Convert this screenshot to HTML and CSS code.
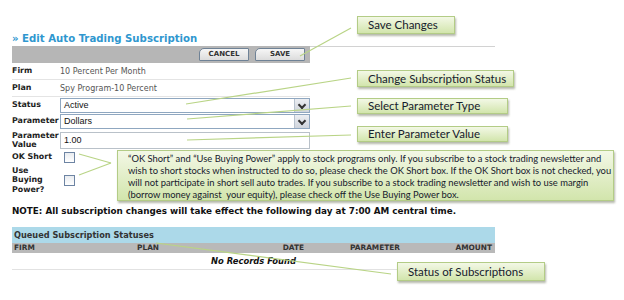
FILE: index.html
```html
<!DOCTYPE html>
<html lang="en">
<head>
  <meta charset="UTF-8">
  <title>Edit Auto Trading Subscription</title>
  <link rel="stylesheet" href="styles.css">
</head>
<body>
  <div class="page">
    <h1 class="title">» Edit Auto Trading Subscription</h1>

    <div class="toolbar-line">
      <div class="toolbar">
        <button class="btn">CANCEL</button>
        <button class="btn">SAVE</button>
      </div>
    </div>

    <div class="form">
      <div class="row row-text sep">
        <span class="label">Firm</span>
        <span class="value">10 Percent Per Month</span>
      </div>
      <div class="row row-text sep">
        <span class="label">Plan</span>
        <span class="value">Spy Program-10 Percent</span>
      </div>
      <div class="row row-select">
        <span class="label">Status</span>
        <div class="select"><span>Active</span><span class="arrow"></span></div>
      </div>
      <div class="row row-select">
        <span class="label">Parameter</span>
        <div class="select"><span>Dollars</span><span class="arrow"></span></div>
      </div>
      <div class="row row-input">
        <span class="label">Parameter<br>Value</span>
        <div class="input">1.00</div>
      </div>
      <div class="row row-check">
        <span class="label">OK Short</span>
        <span class="check"></span>
      </div>
      <div class="row row-check tall">
        <span class="label">Use<br>Buying<br>Power?</span>
        <span class="check"></span>
      </div>
    </div>

    <p class="note">NOTE: All subscription changes will take effect the following day at 7:00 AM central time.</p>

    <div class="queue">
      <div class="queue-title">Queued Subscription Statuses</div>
      <div class="queue-head">
        <span>FIRM</span>
        <span>PLAN</span>
        <span class="right">DATE</span>
        <span class="param">PARAMETER</span>
        <span class="right">AMOUNT</span>
      </div>
      <div class="queue-empty">No Records Found</div>
    </div>
  </div>

  <!-- annotation leaders -->
  <svg class="leaders" width="624" height="300" viewBox="0 0 624 300">
    <g stroke="#b9d486" stroke-width="1.2" fill="none">
      <line x1="351" y1="28" x2="300" y2="56"/>
      <line x1="351" y1="78" x2="186" y2="104"/>
      <line x1="351" y1="106" x2="187" y2="119"/>
      <line x1="351" y1="135" x2="187" y2="140"/>
      <line x1="79" y1="154" x2="111" y2="163"/>
      <line x1="79" y1="175" x2="111" y2="163"/>
      <line x1="156" y1="243" x2="391" y2="274"/>
    </g>
  </svg>

  <div class="callout c-save">Save Changes</div>
  <div class="callout c-status">Change Subscription Status</div>
  <div class="callout c-type">Select Parameter Type</div>
  <div class="callout c-value">Enter Parameter Value</div>
  <div class="callout c-subs">Status of Subscriptions</div>
  <div class="callout c-info">
    “OK Short” and “Use Buying Power” apply to stock programs only. If you subscribe to a stock trading newsletter and<br>
    wish to short stocks when instructed to do so, please check the OK Short box. If the OK Short box is not checked, you<br>
    will not participate in short sell auto trades. If you subscribe to a stock trading newsletter and wish to use margin<br>
    (borrow money against&nbsp; your equity), please check off the Use Buying Power box.
  </div>
</body>
</html>
```

FILE: styles.css
```css
body {
  margin: 0;
  width: 624px;
  height: 300px;
  background: #fff;
  font-family: 'DejaVu Sans', Verdana, sans-serif;
  color: #222;
  position: relative;
  overflow: hidden;
}
.page {
  padding: 31px 0 0 12px;
}
.title {
  margin: 0;
  height: 15px;
  line-height: 15px;
  font-family: 'DejaVu Sans Condensed', 'DejaVu Sans', sans-serif;
  font-size: 11.3px;
  font-weight: bold;
  color: #2f97cf;
}
.toolbar-line {
  width: 483px;
  border-top: 1px solid #d2d2d2;
}
.toolbar {
  width: 298px;
  height: 17px;
  margin-top: -1px;
  background: #b6b6b6;
  display: flex;
  justify-content: flex-end;
  align-items: center;
  gap: 6px;
  padding-right: 5px;
  box-sizing: border-box;
}
.btn {
  width: 50px;
  height: 13px;
  padding: 0;
  border: 1px solid #6f8296;
  border-radius: 5px 1px 1px 1px;
  background: linear-gradient(#f6f6f6, #dcdcdc);
  font-family: 'DejaVu Sans', sans-serif;
  font-size: 7px;
  font-weight: bold;
  color: #333;
  line-height: 11px;
}
.form {
  width: 298px;
}
.row {
  display: flex;
  align-items: center;
}
.label {
  width: 48px;
  flex: none;
  font-size: 7.9px;
  font-weight: bold;
  color: #222;
  line-height: 9.5px;
}
.value {
  font-size: 8px;
  color: #555;
}
.row-text {
  height: 16px;
}
.sep {
  border-bottom: 1px solid #e4e4e4;
}
.row-select {
  height: 16px;
}
.select, .input {
  width: 250px;
  height: 15px;
  box-sizing: border-box;
  border: 1px solid #8fa7c0;
  display: flex;
  align-items: center;
  justify-content: space-between;
  font-family: 'Liberation Sans', Arial, sans-serif;
  font-size: 9px;
  color: #111;
  padding-left: 3px;
  background: #fff;
}
.arrow {
  width: 14px;
  height: 13px;
  background: linear-gradient(#eceef2, #cfd4dc);
  border-left: 1px solid #b8c2ce;
  position: relative;
}
.arrow::after {
  content: '';
  position: absolute;
  left: 4px;
  top: 3px;
  width: 4px;
  height: 4px;
  border-right: 2px solid #333;
  border-bottom: 2px solid #333;
  transform: rotate(45deg);
}
.row-input {
  height: 20px;
  margin-top: 1px;
}
.input {
  height: 17px;
  border-color: #b9c1c9;
}
.row-check {
  height: 14px;
}
.row-check.tall {
  height: 32px;
}
.check {
  width: 9px;
  height: 9px;
  margin-left: 4px;
  border: 1px solid #6d84a3;
  background: linear-gradient(#e9ecf0, #fff);
}
.note {
  margin: 10px 0 0;
  font-size: 8.8px;
  font-weight: bold;
  color: #111;
}
.queue {
  width: 483px;
  margin-top: 11px;
  border-bottom: 1px solid #e2e2e2;
}
.queue-title {
  height: 16px;
  line-height: 16px;
  background: #acd9e9;
  padding-left: 2px;
  font-size: 8.2px;
  font-weight: bold;
  color: #333;
}
.queue-head {
  height: 10px;
  background: #b9b9b9;
  display: grid;
  grid-template-columns: 123px 123px 44px 136px 1fr;
  padding: 0 3px 0 2px;
  font-size: 7.4px;
  font-weight: bold;
  color: #333;
  line-height: 10px;
}
.queue-head .right {
  text-align: right;
}
.queue-head .param {
  padding-left: 46px;
}
.queue-empty {
  height: 16px;
  line-height: 16px;
  text-align: center;
  font-size: 8.4px;
  font-weight: bold;
  font-style: italic;
  color: #111;
}
.leaders {
  position: absolute;
  left: 0;
  top: 0;
}
.callout {
  position: absolute;
  box-sizing: border-box;
  border: 1px solid #b3cc86;
  background: linear-gradient(#f3f8e6, #d2e5ac);
  box-shadow: 1px 2px 2px rgba(90, 100, 70, 0.45);
  font-family: Lato, 'Open Sans', sans-serif;
  font-size: 11.5px;
  color: #16202c;
  padding-left: 10px;
  white-space: nowrap;
}
.c-save {
  left: 357px;
  top: 16px;
  width: 98px;
  height: 18px;
  line-height: 16px;
}
.c-status {
  left: 357px;
  top: 70px;
  width: 157px;
  height: 17px;
  line-height: 15px;
}
.c-type {
  left: 357px;
  top: 98px;
  width: 151px;
  height: 16px;
  line-height: 14px;
}
.c-value {
  left: 357px;
  top: 126px;
  width: 151px;
  height: 16px;
  line-height: 14px;
}
.c-subs {
  left: 397px;
  top: 262px;
  width: 148px;
  height: 19px;
  line-height: 17px;
}
.c-info {
  left: 117px;
  top: 150px;
  width: 497px;
  height: 51px;
  padding: 2px 0 0 10px;
  font-size: 9.4px;
  line-height: 12px;
}
```
